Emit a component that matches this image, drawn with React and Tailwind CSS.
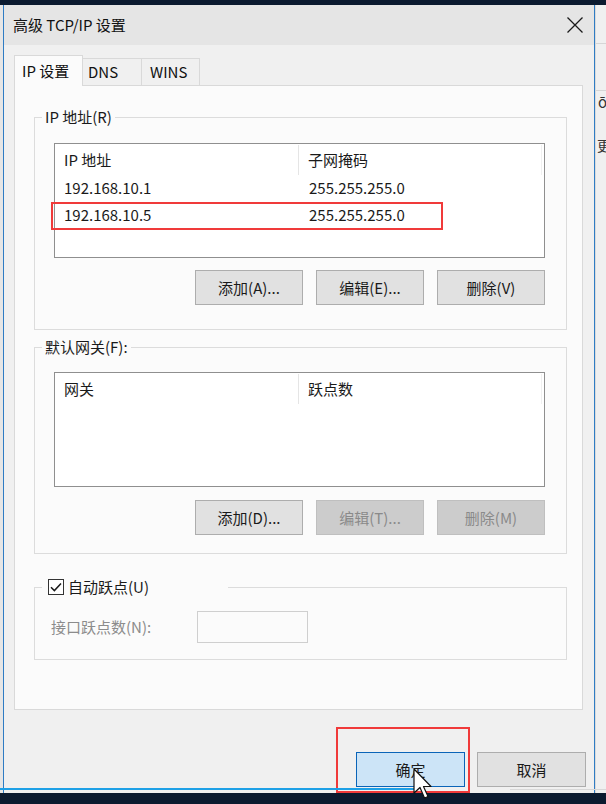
import React from 'react';

const font = "font-['Microsoft_YaHei','Noto_Sans_CJK_SC','Noto_Sans',sans-serif]";

function Btn({ children, disabled, primary, className = '' }) {
  let look = 'bg-[#e1e1e1] border-[#adadad] text-[#1a1a1a]';
  if (disabled) look = 'bg-[#cccccc] border-[#bfbfbf] text-[#8a8a8a]';
  if (primary) look = 'bg-[#cce4f7] border-[#0a64b8] text-[#1a1a1a]';
  return (
    <div className={`h-[35px] w-[108px] border flex items-center justify-center text-[15px] leading-none ${look} ${className}`}>
      {children}
    </div>
  );
}

function ListBox({ col1, col2, rows = [] }) {
  return (
    <div className="ml-[19px] w-[491px] h-[115px] border border-[#8f8f8f] bg-white pt-px">
      <div className="flex h-[30px] text-[15px] text-[#1a1a1a] w-[487px] border-r border-[#f0f0f0]">
        <div className="w-[244px] pl-[9px] flex items-center border-r border-[#e5e5e5]">{col1}</div>
        <div className="flex-1 pl-[9px] flex items-center">{col2}</div>
      </div>
      {rows.map((r) => (
        <div key={r[0]} className="flex h-[27px] text-[15px] text-[#1a1a1a] items-center">
          <div className="w-[244px] pl-[9px]">{r[0]}</div>
          <div className="pl-[10px]">{r[1]}</div>
        </div>
      ))}
    </div>
  );
}

function Group({ legend, legendClass = '', className = '', children }) {
  return (
    <fieldset className={`border border-[#dcdcdc] ${className}`}>
      <legend className={`ml-[7px] px-[3px] h-[20px] text-[15px] leading-[20px] text-[#1a1a1a] ${legendClass}`}>
        {legend}
      </legend>
      {children}
    </fieldset>
  );
}

export default function App() {
  return (
    <div className={`relative w-[606px] h-[804px] overflow-hidden bg-[#0b1a2f] ${font}`}>
      <div className="h-[5px]" />
      <div className="flex h-[788px]">
        {/* left edge of the window behind */}
        <div className="w-[3px] bg-[#e6e6e6]" />

        {/* dialog */}
        <div className="w-[592px] flex flex-col bg-[#f0f0f0] border-l border-r border-[#2f7cc4]">
          <div className="h-[40px] bg-[#e5e5e5] flex items-center justify-between pl-[9px] pr-[9px]">
            <span className="text-[15px] text-[#111]">高级 TCP/IP 设置</span>
            <svg width="18" height="18" viewBox="0 0 18 18" className="mr-[1px]">
              <path d="M1.5 1.5 L16.5 16.5 M16.5 1.5 L1.5 16.5" stroke="#1a1a1a" strokeWidth="1.3" />
            </svg>
          </div>

          <div className="pt-[10px] pl-[10px] pr-[11px]">
            <div className="flex items-end h-[30px]">
              <div className="relative z-10 h-[31px] -mb-px w-[69px] bg-[#fbfbfb] border border-b-0 border-[#d9d9d9] flex items-center pl-[7px] text-[15px] text-[#111]">
                IP 设置
              </div>
              <div className="h-[27px] w-[59px] bg-[#f0f0f0] border border-l-0 border-b-0 border-[#d9d9d9] flex items-center pl-[5px] text-[15px] text-[#111]">
                DNS
              </div>
              <div className="h-[27px] w-[58px] bg-[#f0f0f0] border border-l-0 border-b-0 border-[#d9d9d9] flex items-center pl-[8px] text-[15px] text-[#111]">
                WINS
              </div>
            </div>

            <div className="h-[625px] bg-[#fbfbfb] border border-[#d9d9d9] pl-[19px] pr-[15px] pt-[21px]">
              <Group legend="IP 地址(R)" className="pt-[16px] pb-[24px]">
                <ListBox
                  col1="IP 地址"
                  col2="子网掩码"
                  rows={[
                    ['192.168.10.1', '255.255.255.0'],
                    ['192.168.10.5', '255.255.255.0'],
                  ]}
                />
                <div className="mt-[12px] flex justify-end gap-[13px] pr-[21px]">
                  <Btn>添加(A)...</Btn>
                  <Btn>编辑(E)...</Btn>
                  <Btn>删除(V)</Btn>
                </div>
              </Group>

              <Group legend="默认网关(F):" className="mt-[7px] pt-[15px] pb-[18px]">
                <ListBox col1="网关" col2="跃点数" />
                <div className="mt-[13px] flex justify-end gap-[13px] pr-[21px]">
                  <Btn>添加(D)...</Btn>
                  <Btn disabled>编辑(T)...</Btn>
                  <Btn disabled>删除(M)</Btn>
                </div>
              </Group>

              <Group
                className="mt-[23px] pt-[14px] pb-[16px]"
                legendClass="w-[186px] flex items-center"
                legend={
                  <>
                    <svg width="16" height="16" viewBox="0 0 16 16" className="ml-[3px] mr-[4px]">
                      <rect x="0.5" y="0.5" width="15" height="15" fill="#fff" stroke="#333" />
                      <path d="M3 8.2 L6.4 11.6 L13 4.6" fill="none" stroke="#1a1a1a" strokeWidth="1.5" />
                    </svg>
                    <span>自动跃点(U)</span>
                  </>
                }
              >
                <div className="flex items-center pl-[16px]">
                  <span className="w-[146px] text-[15px] text-[#8c8c8c]">接口跃点数(N):</span>
                  <div className="w-[111px] h-[32px] border border-[#cfcfcf] bg-[#fbfbfb]" />
                </div>
              </Group>
            </div>
          </div>

          <div className="flex-1 flex justify-end gap-[12px] pt-[42px] pr-[8px]">
            <Btn primary className="w-[109px] h-[34px]">确定</Btn>
            <Btn className="w-[109px] h-[34px]">取消</Btn>
          </div>
        </div>

        {/* right edge of the window behind */}
        <div className="flex-1 bg-[#f0f0f0] border-l border-[#dadada] overflow-hidden flex flex-col">
          <div className="h-[38px]" />
          <div className="h-[47px] border-t border-[#d6d6d6]" />
          <div className="border-t border-[#d6d6d6] pl-[2px] text-[15px] text-[#333] leading-[22px]">ō</div>
          <div className="mt-[22px] pl-[1px] text-[14px] text-[#333] whitespace-nowrap">更改</div>
        </div>
      </div>

      {/* annotations and overlays */}
      <div className="absolute left-[51px] top-[202px] w-[392px] h-[28px] border-2 border-[#f03a3a]" />
      <div className="absolute left-[336px] top-[727px] w-[134px] h-[66px] border-2 border-[#f03a3a]" />
      <div className="absolute left-0 top-[788px] w-[418px] h-[2px] bg-[#1ea0e6]" />
      <div className="absolute left-[510px] top-[789px] w-[96px] h-px bg-[#d8d8d8]" />
      <svg className="absolute left-[413px] top-[768px]" width="22" height="36" viewBox="0 0 22 36">
        <path d="M1 1 L1 25 L7 19.5 L11.5 30 L15 28.5 L10.5 18.5 L18 18.5 Z" fill="#fff" stroke="#111" strokeWidth="1.2" strokeLinejoin="round" />
      </svg>
    </div>
  );
}
